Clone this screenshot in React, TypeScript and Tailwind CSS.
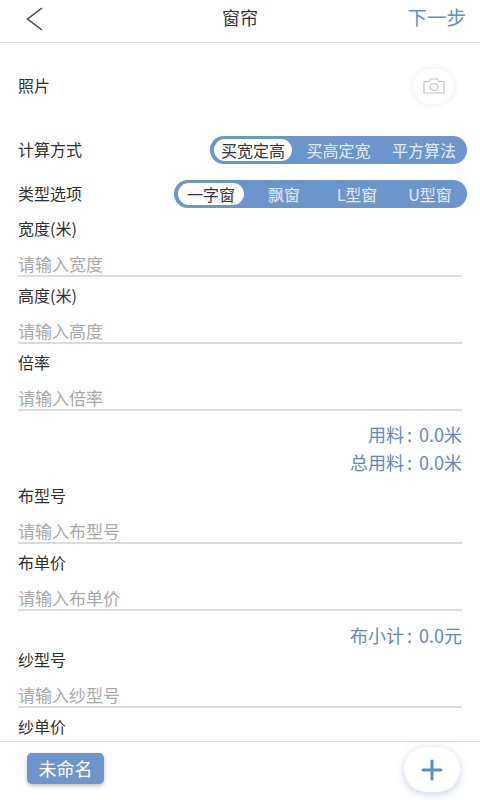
import React from "react";

const font = { fontFamily: '"Noto Sans CJK SC", "Noto Sans", sans-serif' };

function Field({ label, placeholder }: { label: string; placeholder: string }) {
  return (
    <div className="mb-[8px]">
      <div className="h-[20px] text-[16px] leading-[20px] text-[#2e2e2e]">{label}</div>
      <div className="flex h-[37px] items-end">
        <input
          readOnly
          placeholder={placeholder}
          className="h-[22px] w-full bg-transparent text-[17px] leading-[22px] outline-none placeholder:text-[#a8a8a8]"
        />
      </div>
      <div className="h-[2px] bg-[#dcdcdc]" />
    </div>
  );
}

function Segment({ items, cell, gap }: { items: string[]; cell: string; gap: string }) {
  return (
    <div className={`flex h-[28px] items-center rounded-full bg-[#6a95cd] pl-[4px] pr-[4px] ${gap}`}>
      {items.map((t, i) => (
        <div
          key={t}
          className={`flex h-[22px] items-center justify-center rounded-full text-[16px] ${cell} ${
            i === 0 ? "bg-white text-[#333]" : "text-[#e4ecf7]"
          }`}
        >
          {t}
        </div>
      ))}
    </div>
  );
}

function Total({ label, value, className }: { label: string; value: string; className: string }) {
  return (
    <div className={`text-right text-[18px] leading-[22px] text-[#6289b6] ${className}`}>
      {label}
      <span className="mx-[3px]">:</span> {value}
    </div>
  );
}

export default function App() {
  return (
    <div className="flex h-[800px] w-[480px] flex-col overflow-hidden bg-white" style={font}>
      <header className="relative flex h-[43px] shrink-0 items-start justify-center border-b border-[#e2e2e2]">
        <button className="absolute left-[25px] top-[6px]" aria-label="back">
          <svg width="20" height="26" viewBox="0 0 20 26" fill="none" stroke="#444" strokeWidth="1.5">
            <path d="M17 2 L2.500 13 L17 24" />
          </svg>
        </button>
        <div className="mt-[4px] text-[18px] leading-[26px] text-[#333]">窗帘</div>
        <div className="absolute right-[14px] top-[4px] text-[19.500px] leading-[26px] text-[#5f8fc4]">下一步</div>
      </header>

      <main className="min-h-0 flex-1 overflow-hidden px-[18px]">
        <div className="flex h-[86px] items-center justify-between">
          <span className="mt-[-2px] text-[16px] text-[#2e2e2e]">照片</span>
          <div className="mr-[8px] flex h-[35px] w-[41px] items-center justify-center rounded-full bg-white shadow-[0_0_7px_rgba(0,0,0,0.09)]">
            <svg width="22" height="16" viewBox="0 0 22 16" fill="none" stroke="#c4c4c4" strokeWidth="1.2">
              <path d="M1 3.500 H6 L7.500 1 H14.500 L16 3.500 H21 V15 H1 Z" />
              <ellipse cx="11" cy="9" rx="4" ry="3.500" />
            </svg>
          </div>
        </div>

        <div className="mt-[7px] flex h-[28px] items-center justify-between">
          <span className="mt-[-2px] text-[16px] text-[#2e2e2e]">计算方式</span>
          <div className="mr-[-5px]">
            <Segment items={["买宽定高", "买高定宽", "平方算法"]} cell="w-[78px]" gap="gap-[7.500px]" />
          </div>
        </div>

        <div className="mb-[10px] mt-[16px] flex h-[28px] items-center justify-between">
          <span className="mt-[-2px] text-[16px] text-[#2e2e2e]">类型选项</span>
          <div className="mr-[-5px]">
            <Segment items={["一字窗", "飘窗", "L型窗", "U型窗"]} cell="w-[66px]" gap="gap-[7px]" />
          </div>
        </div>

        <div>
          <Field label="宽度(米)" placeholder="请输入宽度" />
          <Field label="高度(米)" placeholder="请输入高度" />
          <Field label="倍率" placeholder="请输入倍率" />
          <Total label="用料" value="0.0米" className="mt-[12px]" />
          <Total label="总用料" value="0.0米" className="mt-[6px]" />
          <div className="h-[12px]" />
          <Field label="布型号" placeholder="请输入布型号" />
          <Field label="布单价" placeholder="请输入布单价" />
          <Total label="布小计" value="0.0元" className="mt-[13px]" />
          <div className="h-[3px]" />
          <Field label="纱型号" placeholder="请输入纱型号" />
          <Field label="纱单价" placeholder="请输入纱单价" />
        </div>
      </main>

      <footer className="flex h-[59px] shrink-0 items-start justify-between border-t border-[#dedede] pl-[27px] pr-[20px]">
        <div className="mt-[11px] flex h-[31px] w-[77px] items-center justify-center rounded-[5px] bg-[#6a95cd] text-[18px] text-white shadow-[0_2px_4px_rgba(0,0,0,0.25)]">
          未命名
        </div>
        <div className="mt-[5px] flex h-[45px] w-[56px] items-center justify-center rounded-full bg-white shadow-[0_2px_8px_rgba(90,130,190,0.35)]">
          <svg width="22" height="22" viewBox="0 0 22 22" stroke="#5c8bc6" strokeWidth="3" strokeLinecap="round">
            <path d="M11 2 V20 M2 11 H20" />
          </svg>
        </div>
      </footer>
    </div>
  );
}
